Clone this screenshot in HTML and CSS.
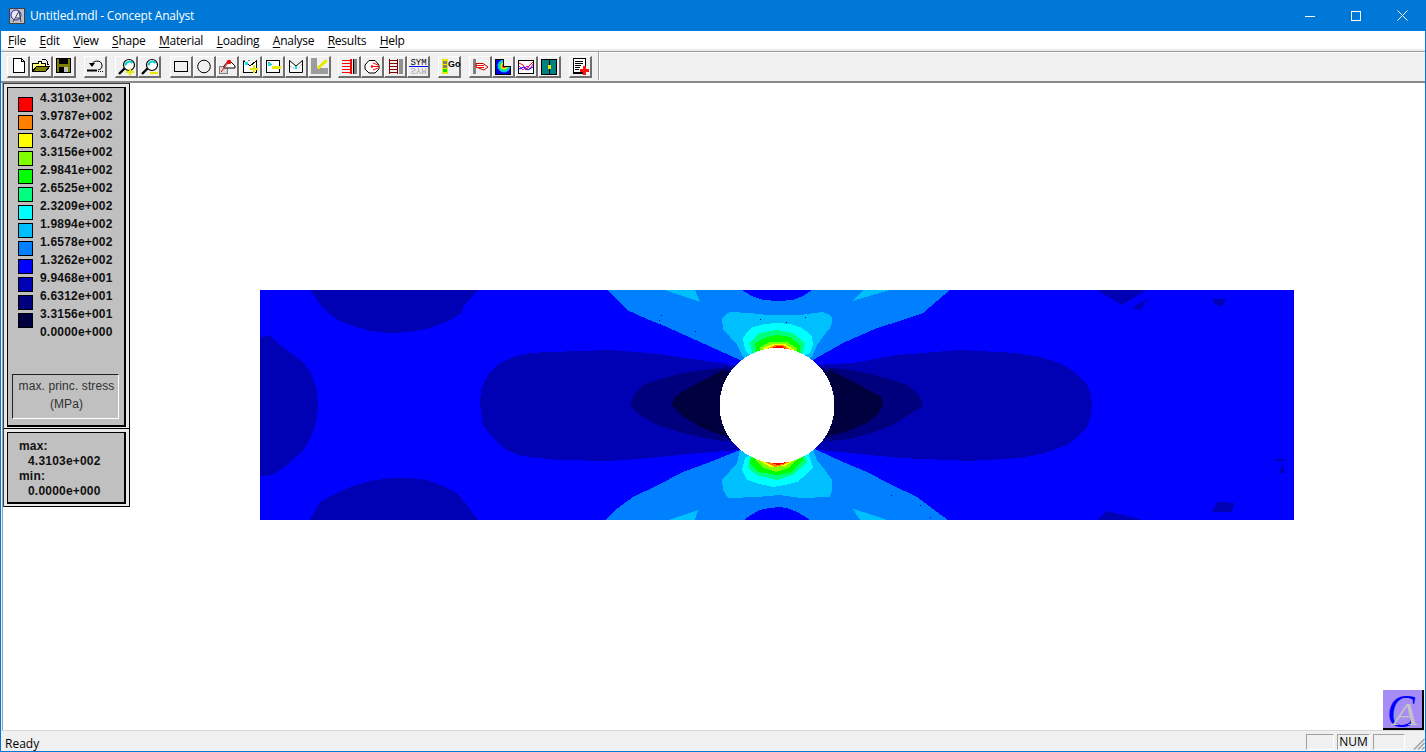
FILE: index.html
```html
<!DOCTYPE html>
<html lang="en">
<head>
<meta charset="utf-8">
<title>Untitled.mdl - Concept Analyst</title>
<link rel="stylesheet" href="styles.css">
</head>
<body>
<div class="window">
  <header class="titlebar">
    <svg class="app-icon" width="16" height="16" viewBox="0 0 16 16" shape-rendering="crispEdges">
      <rect x="0.5" y="0.5" width="15" height="15" fill="#c0c0c0" stroke="#404040"/>
      <circle cx="7" cy="7" r="5" fill="#e8e8f8" stroke="#2020c0" shape-rendering="auto"/>
      <path d="M4 14L10 3L12 14M7 10H12" fill="none" stroke="#404040" shape-rendering="auto"/>
    </svg>
    <span class="title-text">Untitled.mdl - Concept Analyst</span>
    <div class="win-controls">
      <span class="win-btn"><svg width="10" height="10" viewBox="0 0 10 10" shape-rendering="crispEdges"><path d="M0 5.5H10" stroke="#fff"/></svg></span>
      <span class="win-btn"><svg width="10" height="10" viewBox="0 0 10 10" shape-rendering="crispEdges"><rect x="0.5" y="0.5" width="9" height="9" fill="none" stroke="#fff"/></svg></span>
      <span class="win-btn"><svg width="11" height="11" viewBox="0 0 11 11"><path d="M0.5 0.5L10.5 10.5M10.5 0.5L0.5 10.5" stroke="#fff" fill="none"/></svg></span>
    </div>
  </header>

  <nav class="menubar">
    <span class="menu-item"><u>F</u>ile</span>
    <span class="menu-item"><u>E</u>dit</span>
    <span class="menu-item"><u>V</u>iew</span>
    <span class="menu-item"><u>S</u>hape</span>
    <span class="menu-item"><u>M</u>aterial</span>
    <span class="menu-item"><u>L</u>oading</span>
    <span class="menu-item"><u>A</u>nalyse</span>
    <span class="menu-item"><u>R</u>esults</span>
    <span class="menu-item"><u>H</u>elp</span>
  </nav>

  <div class="toolbar">
    <div class="tool-group">
      <span class="tool"><svg viewBox="0 0 21 20" shape-rendering="crispEdges"><path d="M5.5 1.5H13.5L16.5 4.5V15.5H5.5Z" fill="#fff" stroke="#000"/><path d="M13.5 1.5V4.5H16.5" fill="none" stroke="#000"/></svg></span>
      <span class="tool"><svg viewBox="0 0 21 20" shape-rendering="crispEdges"><path d="M1.5 6.5H7.5V4.5H10.5V6.5H14.5V9.5H5.5L1.5 14.5Z" fill="#ffff80" stroke="#000"/><path d="M1.5 14.5L5.5 9.5H18.5L14.5 14.5Z" fill="#808000" stroke="#000"/><path d="M10.5 2.5H14.5L16.5 4.5V7" fill="none" stroke="#000"/><path d="M14.5 6.5H18.5L16.5 8.5Z" fill="#000"/></svg></span>
      <span class="tool"><svg viewBox="0 0 21 20" shape-rendering="crispEdges"><rect x="2.5" y="1.5" width="14" height="14" fill="#808000" stroke="#000"/><rect x="5" y="2" width="9" height="5" fill="#000"/><rect x="5" y="10" width="9" height="5" fill="#c0c0c0"/><rect x="5" y="10" width="5" height="5" fill="#000"/></svg></span>
    </div>
    <div class="tool-group">
      <span class="tool"><svg viewBox="0 0 21 20"><path d="M7 8.5A5 4.5 0 1 1 13 13" fill="none" stroke="#000"/><path d="M4 6H10L7 10Z" fill="#000"/><path d="M2 13.5H12" stroke="#000" stroke-width="2" fill="none"/><path d="M13 14.5H19" stroke="#000" stroke-dasharray="1 1" fill="none"/></svg></span>
    </div>
    <div class="tool-group">
      <span class="tool"><svg viewBox="0 0 21 20"><path d="M3 17L9 11" stroke="#000" stroke-width="2.4"/><circle cx="13" cy="8" r="5.5" fill="#fff" stroke="#000" stroke-width="1.2"/><path d="M9.500 8.500A4 4 0 0 1 16.500 6" fill="none" stroke="#00d0d0" stroke-width="2"/><path d="M10 15H18M14 11.500V18.500" stroke="#e8e800" stroke-width="2.2" fill="none"/></svg></span>
      <span class="tool"><svg viewBox="0 0 21 20"><path d="M3 17L9 11" stroke="#000" stroke-width="2.4"/><circle cx="13" cy="8" r="5.5" fill="#fff" stroke="#000" stroke-width="1.2"/><path d="M9.500 8.500A4 4 0 0 1 16.500 6" fill="none" stroke="#00d0d0" stroke-width="2"/><path d="M11 16H19" stroke="#e8e800" stroke-width="2.2" fill="none"/></svg></span>
    </div>
    <div class="tool-group tool-group-wide">
      <span class="tool"><svg viewBox="0 0 21 20" shape-rendering="crispEdges"><rect x="3.5" y="4.5" width="13" height="10" fill="none" stroke="#000"/></svg></span>
      <span class="tool"><svg viewBox="0 0 21 20"><circle cx="10" cy="9.5" r="6.3" fill="none" stroke="#000"/></svg></span>
      <span class="tool"><svg viewBox="0 0 21 20"><rect x="2.5" y="9.5" width="8" height="7" fill="#d8d8d8" stroke="#808080"/><path d="M7 9L12 3L18 9V11H7Z" fill="#fff" stroke="#000"/><path d="M4 15L11 6" stroke="#ff0000"/><circle cx="12" cy="5" r="2.2" fill="#ff0000"/></svg></span>
      <span class="tool"><svg viewBox="0 0 21 20" shape-rendering="crispEdges"><path d="M3.5 3.5L10 9L16.5 3.5V15.5H3.5Z" fill="#fff" stroke="#000"/><path d="M3 3H5M8 3H10" stroke="#808080"/><rect x="5" y="5" width="3" height="3" fill="#00e8e8"/><path d="M10 12H18M14 8V16" stroke="#e8e800" stroke-width="2"/></svg></span>
      <span class="tool"><svg viewBox="0 0 21 20" shape-rendering="crispEdges"><rect x="3.5" y="3.5" width="13" height="12" fill="#fff" stroke="#000"/><path d="M5 5L9 8" stroke="#808080"/><rect x="5" y="6" width="3" height="3" fill="#00e8e8"/><rect x="9" y="9" width="9" height="3" fill="#e8e800"/></svg></span>
      <span class="tool"><svg viewBox="0 0 21 20"><path d="M3.5 3.5L10 9L16.5 3.5V15.5H3.5Z" fill="#fff" stroke="#000"/><path d="M4 9L9 12M16 7L12 12" stroke="#a0a0a0" stroke-dasharray="2 1"/><rect x="9" y="9" width="2" height="3" fill="#00e8e8"/></svg></span>
      <span class="tool"><svg viewBox="0 0 21 20" shape-rendering="crispEdges"><path d="M2 1H8V11H19V17H2Z" fill="#9c9c9c"/><path d="M9 11L16 5" stroke="#e8e800" stroke-width="3"/><path d="M14 3H18V7Z" fill="#e8e800"/></svg></span>
    </div>
    <div class="tool-group tool-group-narrow">
      <span class="tool"><svg viewBox="0 0 21 20" shape-rendering="crispEdges"><path d="M3 3.5H11M3 6.5H11M3 9.5H11M3 12.5H11M3 15.5H11" stroke="#ff0000"/><path d="M11 2H13V17H11Z" fill="#ff0000"/><rect x="14" y="2" width="4" height="15" fill="#808080"/><rect x="14" y="2" width="1" height="15" fill="#000"/></svg></span>
      <span class="tool"><svg viewBox="0 0 21 20"><path d="M7 3.5H13L17 8V12L13 16H7L3 12V8Z" fill="#fff" stroke="#000"/><path d="M10 9.5H17M11 6L16 8M11 13L16 11" stroke="#ff0000"/><circle cx="10" cy="9.5" r="1.2" fill="#ff0000"/></svg></span>
      <span class="tool"><svg viewBox="0 0 21 20" shape-rendering="crispEdges"><path d="M4.500 2V17M12.500 2V17" stroke="#800000"/><path d="M4 3.500H13M4 6.500H13M4 9.500H13M4 12.500H13M4 15.500H13" stroke="#800000"/><rect x="14" y="2" width="4" height="15" fill="#909090"/></svg></span>
      <span class="tool"><svg viewBox="0 0 21 20"><text class="sym-text" x="10.500" y="8">SYM</text><path d="M1 9.500H20" stroke="#0000ff" fill="none" shape-rendering="crispEdges"/><text class="sym-text sym-mirror" transform="translate(0 19) scale(1 -1)" x="10.500" y="8">SYM</text></svg></span>
    </div>
    <div class="tool-group">
      <span class="tool"><svg viewBox="0 0 21 20" shape-rendering="crispEdges"><rect x="3" y="2" width="6" height="15" fill="#e8e800"/><rect x="4" y="4" width="4" height="3" fill="#808080"/><rect x="4" y="8" width="4" height="3" fill="#808080"/><rect x="4" y="12" width="4" height="3" fill="#00e800"/><text class="go-text" x="9" y="10">Go</text></svg></span>
    </div>
    <div class="tool-group">
      <span class="tool"><svg viewBox="0 0 21 20"><rect x="3" y="2" width="3" height="15" fill="#808080"/><path d="M6 6.500H13L18 10L14 13L6 10Z" fill="#fff" stroke="#c00000"/><path d="M6 8.500H14M6 10.500H14" stroke="#ff0000"/></svg></span>
      <span class="tool"><svg viewBox="0 0 21 20"><rect x="2.500" y="2.500" width="15" height="15" fill="#0000e0" stroke="#000" shape-rendering="crispEdges"/><circle cx="11" cy="9" r="6.500" fill="#00c0ff"/><circle cx="11" cy="9" r="5" fill="#00f080"/><circle cx="11" cy="9" r="3.500" fill="#e8e800"/><circle cx="11" cy="9" r="2" fill="#ff2000"/><path d="M11 2H18V10H11Z" fill="#f0f0f0" shape-rendering="crispEdges"/><path d="M10.500 2.500V9.500H17.500" stroke="#000" fill="none" shape-rendering="crispEdges"/><path d="M10.500 2.500H3" stroke="#000" fill="none" shape-rendering="crispEdges"/></svg></span>
      <span class="tool"><svg viewBox="0 0 21 20"><rect x="2.500" y="3.500" width="15" height="13" fill="#fff" stroke="#000"/><path d="M3 6L7 8L10 13L13 9L17 5" stroke="#ff0000" fill="none"/><path d="M3 9L7 13L11 9L14 12L17 7" stroke="#e000e0" fill="none"/><path d="M3 12L8 10L12 13L17 10" stroke="#0000ff" fill="none"/></svg></span>
      <span class="tool"><svg viewBox="0 0 21 20" shape-rendering="crispEdges"><rect x="2.500" y="2.500" width="15" height="15" fill="#008080" stroke="#000"/><path d="M10 3V17" stroke="#000" fill="none"/><rect x="9" y="8" width="3" height="4" fill="#e8e800"/></svg></span>
    </div>
    <div class="tool-group">
      <span class="tool"><svg viewBox="0 0 21 20" shape-rendering="crispEdges"><rect x="3.500" y="1.500" width="12" height="15" fill="#fff" stroke="#000"/><rect x="4" y="15" width="12" height="2" fill="#000"/><path d="M5 4.500H13M5 6.500H13M5 8.500H11M5 10.500H10M5 12.500H9" stroke="#000"/><path d="M10 13H19M14.500 9V18" stroke="#ff1010" stroke-width="3"/></svg></span>
    </div>
    <span class="toolbar-sep"></span>
  </div>

  <main class="client">
    <aside class="side-panels">
      <section class="panel">
        <div class="panel-inner legend">
          <div class="legend-scale">
            <div class="swatches">
              <span class="swatch c1"></span><span class="swatch c2"></span><span class="swatch c3"></span><span class="swatch c4"></span><span class="swatch c5"></span><span class="swatch c6"></span><span class="swatch c7"></span><span class="swatch c8"></span><span class="swatch c9"></span><span class="swatch c10"></span><span class="swatch c11"></span><span class="swatch c12"></span><span class="swatch c13"></span>
            </div>
            <div class="values">
              <span>4.3103e+002</span><span>3.9787e+002</span><span>3.6472e+002</span><span>3.3156e+002</span><span>2.9841e+002</span><span>2.6525e+002</span><span>2.3209e+002</span><span>1.9894e+002</span><span>1.6578e+002</span><span>1.3262e+002</span><span>9.9468e+001</span><span>6.6312e+001</span><span>3.3156e+001</span><span>0.0000e+000</span>
            </div>
          </div>
          <div class="quantity"><span>max. princ. stress</span><span>(MPa)</span></div>
        </div>
      </section>
      <section class="panel">
        <div class="panel-inner extremes">
          <span>max:</span>
          <span class="ext-value">4.3103e+002</span>
          <span>min:</span>
          <span class="ext-value">0.0000e+000</span>
        </div>
      </section>
    </aside>

    <svg class="plot" width="1034" height="230" viewBox="0 0 1034 230" shape-rendering="crispEdges">
      <rect width="1034" height="230" fill="#0000ff"/>
      <g fill="#0000b4">
        <polygon points="50,0 60,14 68,23 78,30 90,35 110,41 130,43 150,42 170,38 188,31 202,23 203,17 218,0"/>
        <polygon points="50,230 60,212 75,204 90,197 110,191 130,188 150,188 167,190 183,196 197,203 207,215 218,230"/>
        <polygon points="0,47 10,46 23,57 43,72 49,80 53,88 57,100 58,115 57,128 53,142 45,158 37,166 27,175 13,185 0,186"/>
        <polygon points="220,115 221,100 225,90 230,82 240,73 253,67 270,63 290,62 350,60 390,63 440,70 480,76 520,100 520,130 480,160 440,163 390,168 350,171 300,170 277,168 258,165 243,158 232,147 223,135"/>
        <polygon points="832,115 831,105 827,95 815,82 800,73 780,67 757,63 700,60 637,65 593,73 553,75 520,100 520,130 560,160 600,164 640,168 710,171 760,168 785,163 807,155 818,147 827,137 831,126"/>
        <polygon points="837,0 862,15 887,0"/>
        <polygon points="872,18 888,8 880,20"/>
        <polygon points="952,9 967,9 962,16 957,16"/>
        <polygon points="837,230 847,221 883,230"/>
        <polygon points="952,222 957,212 975,213 972,222"/>
        <polygon points="1012,171 1020,168 1028,171"/>
        <polygon points="1018,183 1022,175 1025,183"/>
      </g>
      <g fill="#00007f">
        <polygon points="370,115 374,105 383,95 400,89 423,83 450,79 470,77 517,100 517,130 473,152 450,149 423,143 400,136 383,127 374,120"/>
        <polygon points="663,115 659,105 647,95 630,89 607,83 585,79 560,77 517,100 517,130 560,152 590,149 612,143 633,135 650,124 660,118"/>
      </g>
      <g fill="#00003f">
        <polygon points="412,115 414,108 420,103 440,92 463,80 517,100 517,130 470,148 455,143 440,137 420,124"/>
        <polygon points="623,115 622,108 613,102 590,90 570,80 517,100 517,130 563,148 585,142 607,133 618,124"/>
      </g>
      <g fill="#0080ff">
        <polygon points="347,0 357,10 367,20 387,29 407,37 440,52 480,70 517,90 553,70 583,53 617,38 640,31 663,23 677,11 690,0"/>
        <polygon points="345,230 358,218 373,207 398,195 423,182 450,172 480,160 517,140 557,160 583,172 607,182 632,195 657,207 673,219 688,230"/>
      </g>
      <g fill="#0000ff">
        <polygon points="482,0 492,6 503,10 518,11 533,10 543,6 552,0"/>
        <polygon points="484,230 491,225 500,220 510,218 520,217 530,219 537,222 544,226 550,230"/>
      </g>
      <g fill="#00bfff">
        <polygon points="405,0 440,12 435,0"/>
        <polygon points="592,11 603,0 630,0"/>
        <polygon points="408,230 438,220 435,230"/>
        <polygon points="593,219 600,230 627,230 610,224"/>
        <polygon points="462,28 465,25 470,22 490,23 507,25 540,25 555,23 563,22 570,25 572,28 572,33 570,38 563,47 557,55 552,67 517,80 483,67 477,55 470,47 463,40"/>
        <polygon points="462,190 463,200 468,208 497,207 520,205 540,208 570,207 572,200 572,190 565,180 557,170 553,160 517,150 480,160 477,173 470,181"/>
      </g>
      <g fill="#00ffff">
        <polygon points="483,48 487,42 493,37 505,34 517,33 530,34 540,37 546,41 552,47 553,55 550,63 517,75 487,63 484,56"/>
        <polygon points="482,180 487,190 500,194 513,197 525,195 537,192 546,185 553,177 550,168 548,163 517,150 485,168"/>
      </g>
      <g fill="#00ff80">
        <polygon points="490,52 495,47 500,43 517,40 533,43 539,48 545,53 543,63 517,75 492,63"/>
        <polygon points="488,178 497,185 517,190 533,185 547,173 545,165 517,150 490,165"/>
      </g>
      <g fill="#00ff00">
        <polygon points="495,53 507,47 518,45 530,47 540,55 540,65 517,75 497,65"/>
        <polygon points="490,173 498,182 517,185 532,182 543,170 540,160 517,150 495,160"/>
      </g>
      <g fill="#80ff00">
        <polygon points="500,57 510,52 527,52 537,58 537,65 517,75 500,65"/>
        <polygon points="495,170 503,178 517,182 528,178 538,168 517,150"/>
      </g>
      <g fill="#ffff00">
        <polygon points="503,58 513,54 525,54 535,60 517,75"/>
        <polygon points="500,171 510,177 525,176 535,170 517,150"/>
      </g>
      <g fill="#ff8000">
        <polygon points="507,59 515,55 523,55 532,60 517,75"/>
        <polygon points="505,172 515,177 523,175 530,172 517,150"/>
      </g>
      <g fill="#ff0000">
        <polygon points="512,58 517,56 522,56 525,58 517,70"/>
        <polygon points="512,173 517,175 522,174 525,173 517,160"/>
      </g>
      <circle cx="517" cy="115.500" r="57.500" fill="#ffffff"/>
      <path d="M401 25h1v1h-1zM399 30h1v1h-1zM435 41h1v1h-1zM442 58h1v1h-1zM500 29h1v1h-1zM526 32h1v1h-1zM545 27h1v1h-1zM657 26h1v1h-1zM693 218h1v1h-1zM660 215h1v1h-1zM670 227h1v1h-1zM631 205h1v1h-1z" fill="#0000b4"/>
    </svg>

    <div class="logo"><span class="logo-c">C</span><span class="logo-a">A</span></div>
  </main>

  <footer class="statusbar">
    <span class="status-text">Ready</span>
    <span class="status-cell cell-a"></span>
    <span class="status-cell cell-b">NUM</span>
    <span class="status-cell cell-c"></span>
    <svg class="grip" width="12" height="12" viewBox="0 0 12 12"><path d="M11.500 1L1 11.500M11.500 5L5 11.500M11.500 9L9 11.500" stroke="#a0a0a0" stroke-width="1.500" fill="none"/></svg>
  </footer>
</div>
</body>
</html>
```

FILE: styles.css
```css
* { box-sizing: border-box; }

html, body {
  margin: 0;
  padding: 0;
  height: 100%;
  overflow: hidden;
  background: #fff;
}

.window {
  width: 1426px;
  height: 752px;
  display: flex;
  flex-direction: column;
  border: 1px solid #0078d7;
  border-top: 0;
  font-family: "Open Sans", "Noto Sans", sans-serif;
  font-size: 12px;
  color: #000;
}

.titlebar {
  flex: 0 0 31px;
  display: flex;
  align-items: center;
  margin: 0 -1px;
  padding-left: 9px;
  background: #0078d7;
  color: #fff;
}

.app-icon { flex: none; }

.title-text {
  margin-left: 5px;
  font-size: 12px;
  letter-spacing: -0.18px;
}

.win-controls {
  display: flex;
  margin-left: auto;
  margin-right: 1px;
  height: 100%;
}

.win-btn {
  width: 46px;
  height: 100%;
  display: flex;
  align-items: center;
  justify-content: center;
}

.menubar {
  flex: 0 0 18px;
  min-height: 0;
  display: flex;
  align-items: center;
  gap: 13.5px;
  padding-left: 7px;
  background: #fff;
  font-size: 12px;
  line-height: 18px;
  letter-spacing: -0.25px;
}

.menu-item { margin-top: 2px; }
.menu-item u { text-underline-offset: 2px; }

.toolbar {
  flex: 0 0 34px;
  display: flex;
  gap: 8px;
  padding: 5px 0 0 6px;
  background: #f0f0f0;
  border-top: 2px solid #ececec;
  border-bottom: 2px solid #8a8a8a;
  box-shadow: inset 0 1px 0 #999, inset 0 2px 0 #fff;
}

.tool-group { display: flex; }
.tool-group-wide { margin-left: 1px; }
.tool-group-narrow { margin-left: -1px; }

.tool {
  width: 23px;
  height: 22px;
  padding: 1px;
  background: #f0f0f0;
  border-style: solid;
  border-width: 1px 2px 2px 1px;
  border-color: #fff #6e6e6e #6e6e6e #fff;
}

.tool svg {
  display: block;
  width: 21px;
  height: 20px;
  margin: -1px 0 0 -1px;
  overflow: visible;
}

.sym-text {
  font-family: "Liberation Mono", monospace;
  font-size: 9px;
  text-anchor: middle;
  fill: #000;
}

.sym-mirror { fill: #a8a8a8; }

.go-text {
  font-family: "Liberation Sans", sans-serif;
  font-size: 9px;
  font-weight: 700;
  fill: #000;
}

.toolbar-sep {
  width: 0;
  height: 28px;
  margin: -4px 0 0 -2px;
  border-left: 1px solid #a0a0a0;
  border-right: 1px solid #fff;
}

.client {
  position: relative;
  flex: 1 1 auto;
  min-height: 0;
  display: flex;
  align-items: flex-start;
  padding-left: 1px;
  background: #fff;
  border-left: 1px solid #f0f0f0;
  box-shadow: inset 1px 0 0 #a0a0a0;
}

.side-panels {
  flex: none;
  width: 127px;
  display: flex;
  flex-direction: column;
  border-left: 1px solid #404040;
}

.panel {
  padding: 3px 3px 1px 3px;
  border: 1px solid #000;
  border-left: 0;
  border-top-color: #404040;
  background: #e8e8e8;
}

.panel + .panel { border-top: 0; padding-top: 3px; padding-bottom: 2px; }

.panel-inner {
  border: 1px solid #000;
  border-right-width: 2px;
  border-bottom-width: 2px;
  background: #c0c0c0;
  font-family: "Liberation Sans", Arial, sans-serif;
  color: #101010;
}

.legend { height: 340px; padding: 3px 0 0 0; }

.legend-scale { display: flex; }

.swatches {
  display: flex;
  flex-direction: column;
  gap: 3px;
  width: 32px;
  padding: 6px 0 0 10px;
}

.swatch {
  display: block;
  width: 15px;
  height: 15px;
  border: 1px solid #000;
}

.c1 { background: #ff0000; }
.c2 { background: #ff8000; }
.c3 { background: #ffff00; }
.c4 { background: #80ff00; }
.c5 { background: #00ff00; }
.c6 { background: #00ff80; }
.c7 { background: #00ffff; }
.c8 { background: #00bfff; }
.c9 { background: #0080ff; }
.c10 { background: #0000ff; }
.c11 { background: #0000b4; }
.c12 { background: #00007f; }
.c13 { background: #00003f; }

.values {
  display: flex;
  flex-direction: column;
  margin-top: -2px;
  font-size: 12px;
  font-weight: 700;
  line-height: 18px;
  letter-spacing: 0.2px;
}

.quantity {
  width: 107px;
  height: 45px;
  margin: 33px 0 0 4px;
  display: flex;
  flex-direction: column;
  align-items: center;
  padding: 2px 0 0 2px;
  border: 1px solid;
  border-color: #202020 #fff #fff #202020;
  font-size: 12px;
  line-height: 18px;
  letter-spacing: 0.1px;
  color: #303030;
}

.extremes {
  height: 72px;
  display: flex;
  flex-direction: column;
  padding: 6px 0 0 11px;
  font-size: 12px;
  font-weight: 700;
  line-height: 15px;
  letter-spacing: 0.2px;
}

.ext-value { padding-left: 9px; }

.plot {
  flex: none;
  display: block;
  margin: 207px 0 0 130px;
}

.logo {
  position: absolute;
  right: 1px;
  bottom: 0;
  width: 41px;
  height: 40px;
  background: #a68cf5;
  border-right: 2px solid #000;
  border-bottom: 2px solid #000;
  font-family: "Liberation Serif", serif;
  font-style: italic;
}

.logo-c {
  position: absolute;
  left: 4px;
  top: -1px;
  font-size: 46px;
  line-height: 46px;
  color: #0000ff;
  transform: scaleX(0.9);
  transform-origin: left center;
}

.logo-a {
  position: absolute;
  left: 10px;
  top: 8px;
  font-size: 32px;
  line-height: 32px;
  color: #c4c4c4;
  transform: scaleX(1.25);
  transform-origin: left center;
}

.statusbar {
  flex: 0 0 21px;
  min-height: 0;
  display: flex;
  align-items: flex-end;
  padding: 0 0 1px 4px;
  background: #f0f0f0;
  border-top: 1px solid #d8d8d8;
  font-size: 12px;
}

.status-text {
  align-self: center;
  line-height: 16px;
  margin-top: 6px;
}

.status-cell {
  height: 16px;
  display: block;
  border: 1px solid;
  border-color: #a0a0a0 #fff #fff #a0a0a0;
  line-height: 14px;
  text-align: center;
}

.cell-a { width: 28px; margin-left: auto; }
.cell-b { width: 33px; margin-left: 3px; }
.cell-c { width: 32px; margin-left: 3px; }

.grip {
  flex: none;
  margin-left: 8px;
}
```
